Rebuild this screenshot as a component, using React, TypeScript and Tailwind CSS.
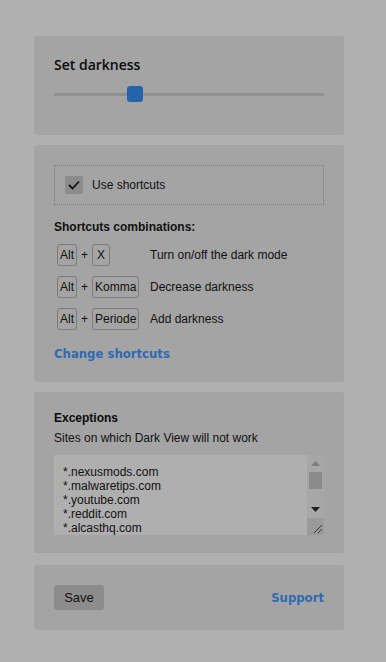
import React from 'react';

const SHORTCUTS = [
  { key: 'X', label: 'Turn on/off the dark mode' },
  { key: 'Komma', label: 'Decrease darkness' },
  { key: 'Periode', label: 'Add darkness' },
];

const EXCEPTIONS = ['*.nexusmods.com', '*.malwaretips.com', '*.youtube.com', '*.reddit.com', '*.alcasthq.com'];

function Key({ children }: { children: React.ReactNode }) {
  return (
    <span className="flex h-[22px] min-w-[18px] items-center justify-center rounded-[3px] border border-[#7c7c7c] px-[2px] text-[12px] leading-none text-[#111]">
      {children}
    </span>
  );
}

function Scrollbar() {
  return (
    <div className="flex w-[17px] flex-col bg-[#a7a7a7]">
      <div className="flex h-[17px] items-center justify-center">
        <svg width="9" height="5" viewBox="0 0 9 5" aria-hidden>
          <path d="M0 5 L4.5 0 L9 5 Z" fill="#7d7d7d" />
        </svg>
      </div>
      <div className="mx-[2px] h-[17px] bg-[#8b8b8b]" />
      <div className="flex-1" />
      <div className="flex h-[17px] items-center justify-center">
        <svg width="9" height="5" viewBox="0 0 9 5" aria-hidden>
          <path d="M0 0 L9 0 L4.5 5 Z" fill="#202020" />
        </svg>
      </div>
      <div className="flex h-[17px] items-end justify-end bg-[#9a9a9a] p-[2px]">
        <svg width="9" height="9" viewBox="0 0 9 9" aria-hidden>
          <path d="M9 1 L1 9 M9 5 L5 9" stroke="#3a3a3a" strokeWidth="1" />
        </svg>
      </div>
    </div>
  );
}

export default function App() {
  return (
    <div
      className="min-h-[662px] w-full bg-[#b0b0b0] pt-[36px] text-[#111]"
      style={{ fontFamily: '"Liberation Sans", Arial, sans-serif' }}
    >
      <div className="ml-[34px] flex w-[310px] flex-col">
        {/* darkness */}
        <section className="h-[99px] rounded-[3px] bg-[#a4a4a4] px-[20px] pt-[21px]">
          <h2
            className="text-[14px] font-semibold leading-[16px] text-[#0b0b0b]"
            style={{ fontFamily: '"Open Sans", "Noto Sans", sans-serif' }}
          >
            Set darkness
          </h2>
          <div className="relative mt-[13px] flex h-[16px] items-center">
            <div className="h-[3px] w-full rounded-full bg-[#8f8f8f]" />
            <div className="absolute left-[73px] top-0 h-[16px] w-[16px] rounded-[3px] bg-[#2563ab]" />
          </div>
        </section>

        {/* shortcuts */}
        <section className="mt-[10px] rounded-[3px] bg-[#a4a4a4] px-[20px] pb-[20px] pt-[20px]">
          <label className="flex h-[40px] items-center gap-[9px] border border-dotted border-[#7e7e7e] pl-[10px]">
            <span className="flex h-[18px] w-[18px] items-center justify-center rounded-[2px] bg-[#8c8c8c]">
              <svg width="12" height="10" viewBox="0 0 12 10" aria-hidden>
                <path d="M1 5 L4.5 8.5 L11 1.5" fill="none" stroke="#111" strokeWidth="1.8" />
              </svg>
            </span>
            <span className="text-[12px] text-[#111]">Use shortcuts</span>
          </label>

          <h3 className="mt-[14px] text-[12px] font-bold leading-[16px]">Shortcuts combinations:</h3>
          <div className="mt-[9px] flex flex-col gap-[10px]">
            {SHORTCUTS.map((s) => (
              <div key={s.key} className="flex h-[22px] items-center">
                <div className="flex w-[96px] items-center pl-[3px]">
                  <Key>Alt</Key>
                  <span className="mx-[4px] text-[12px]">+</span>
                  <Key>{s.key}</Key>
                </div>
                <span className="text-[12px] text-[#111]">{s.label}</span>
              </div>
            ))}
          </div>
          <a
            className="mt-[16px] block text-[11.7px] font-bold leading-[16px] text-[#2d6ab3]"
            style={{ fontFamily: '"DejaVu Sans", Verdana, sans-serif' }}
          >
            Change shortcuts
          </a>
        </section>

        {/* exceptions */}
        <section className="mt-[10px] rounded-[3px] bg-[#a4a4a4] px-[20px] pb-[18px] pt-[18px]">
          <h3 className="text-[12px] font-bold leading-[16px] text-[#0b0b0b]">Exceptions</h3>
          <p className="mt-[4px] text-[12px] leading-[16px] text-[#111]">Sites on which Dark View will not work</p>
          <div className="mt-[9px] flex h-[80px] bg-[#afafaf]">
            <div className="flex-1 overflow-hidden pl-[9px] pt-[10px] text-[12px] leading-[14px] text-[#111]">
              {EXCEPTIONS.map((e) => (
                <div key={e}>{e}</div>
              ))}
            </div>
            <Scrollbar />
          </div>
        </section>

        {/* footer */}
        <section className="mt-[12px] flex h-[65px] items-center justify-between rounded-[3px] bg-[#a4a4a4] px-[20px]">
          <button
            type="button"
            className="h-[25px] w-[50px] rounded-[3px] bg-[#8c8c8c] text-[13px] text-[#111]"
          >
            Save
          </button>
          <a
            className="pt-[2px] text-[11.7px] font-bold text-[#2d6ab3]"
            style={{ fontFamily: '"DejaVu Sans", Verdana, sans-serif' }}
          >
            Support
          </a>
        </section>
      </div>
    </div>
  );
}
